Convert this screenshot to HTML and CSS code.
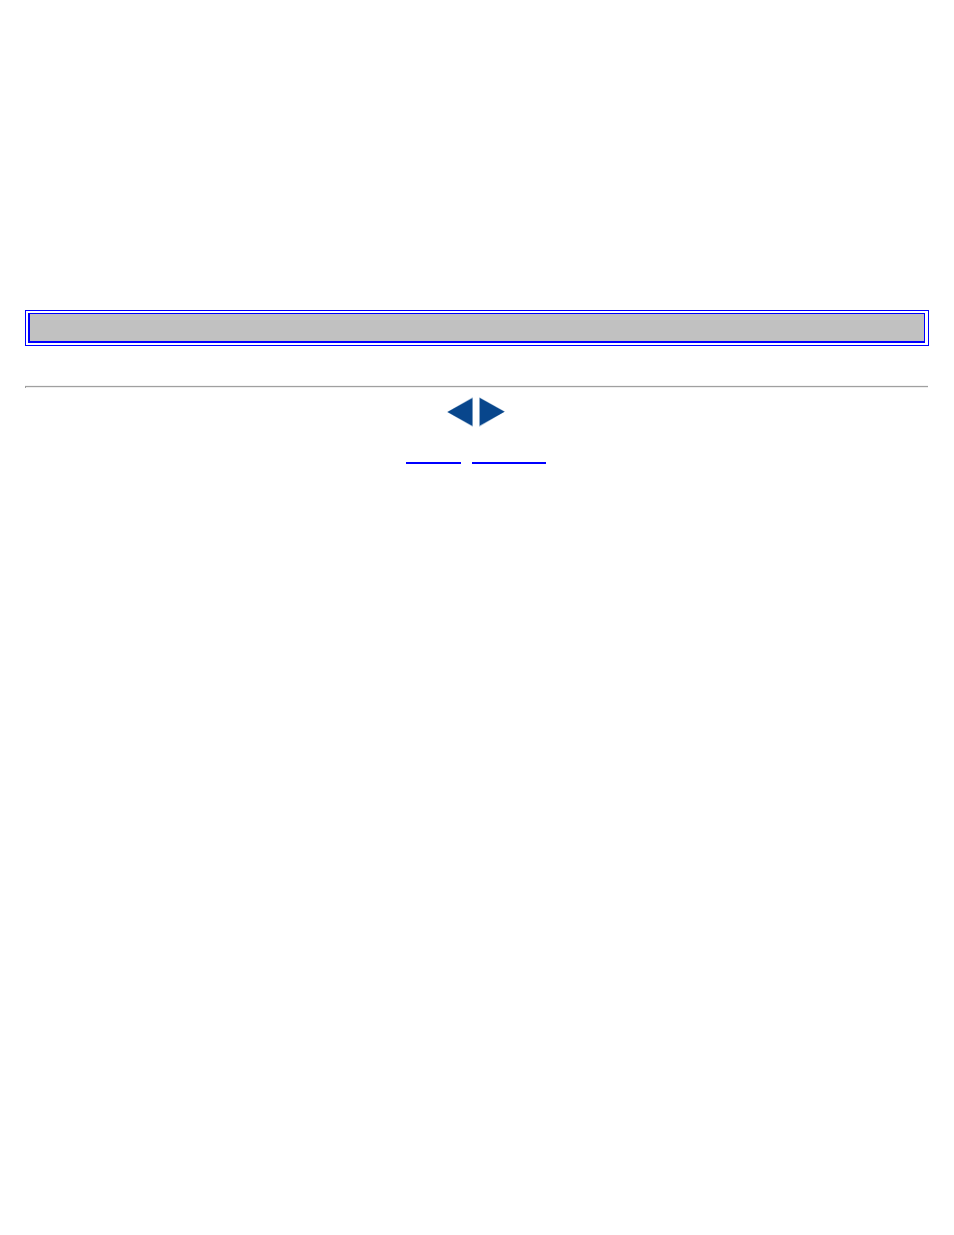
FILE: index.html
```html
<!DOCTYPE html>
<html lang="en">
<head>
<meta charset="utf-8">
<title>Page</title>
<link rel="stylesheet" href="styles.css">
</head>
<body>
<main class="page">
  <div class="banner"><div class="banner-fill"></div></div>
  <hr class="rule">
  <nav class="arrows" aria-label="Pages">
    <a class="arrow" href="#previous" aria-label="Previous"><svg width="26" height="30" viewBox="0 0 26 30"><path d="M0 15 25 .5h1v29h-1z" fill="#a9c0d8"/><path d="M.5 15 25.300 1.200v27.600z" fill="#08468c"/></svg></a>
    <a class="arrow" href="#next" aria-label="Next"><svg width="26" height="30" viewBox="0 0 26 30"><path d="M26 14.500 1 .5H0v29h1z" fill="#a9c0d8"/><path d="M25.500 14.700.8 1v27.600z" fill="#08468c"/></svg></a>
  </nav>
  <nav class="links" aria-label="Links">
    <a class="link link-short" href="#first" aria-label="First"></a>
    <a class="link link-long" href="#second" aria-label="Second"></a>
  </nav>
</main>
</body>
</html>
```

FILE: styles.css
```css
body {
  margin: 0;
  background: #fff;
  font-family: "Liberation Serif", serif;
}

.page {
  padding: 310px 25px 0;
}

.banner {
  padding: 2px 3px 2px 2px;
  border: 1px solid #00f;
}

.banner-fill {
  height: 27px;
  border: solid #00f;
  border-width: 1px 1px 2px 2px;
  background: #c1c1c1;
}

.rule {
  height: 1px;
  margin: 40px 1px 0 0;
  border: solid #a0a0a0;
  border-width: 1px 0 0 1px;
  background: #eee;
  box-shadow: 0 -1px #f4f4f4;
}

.arrows {
  display: flex;
  justify-content: center;
  gap: 6px;
  padding: 9px 2px 0 0;
}

.arrow {
  display: block;
  height: 30px;
}

.arrow svg {
  display: block;
}

.links {
  display: flex;
  justify-content: center;
  gap: 11px;
  padding: 19px 2px 0 0;
}

.link {
  height: 16px;
  border-bottom: 2px solid #00f;
}

.link-short {
  width: 55px;
}

.link-long {
  width: 74px;
}
```
